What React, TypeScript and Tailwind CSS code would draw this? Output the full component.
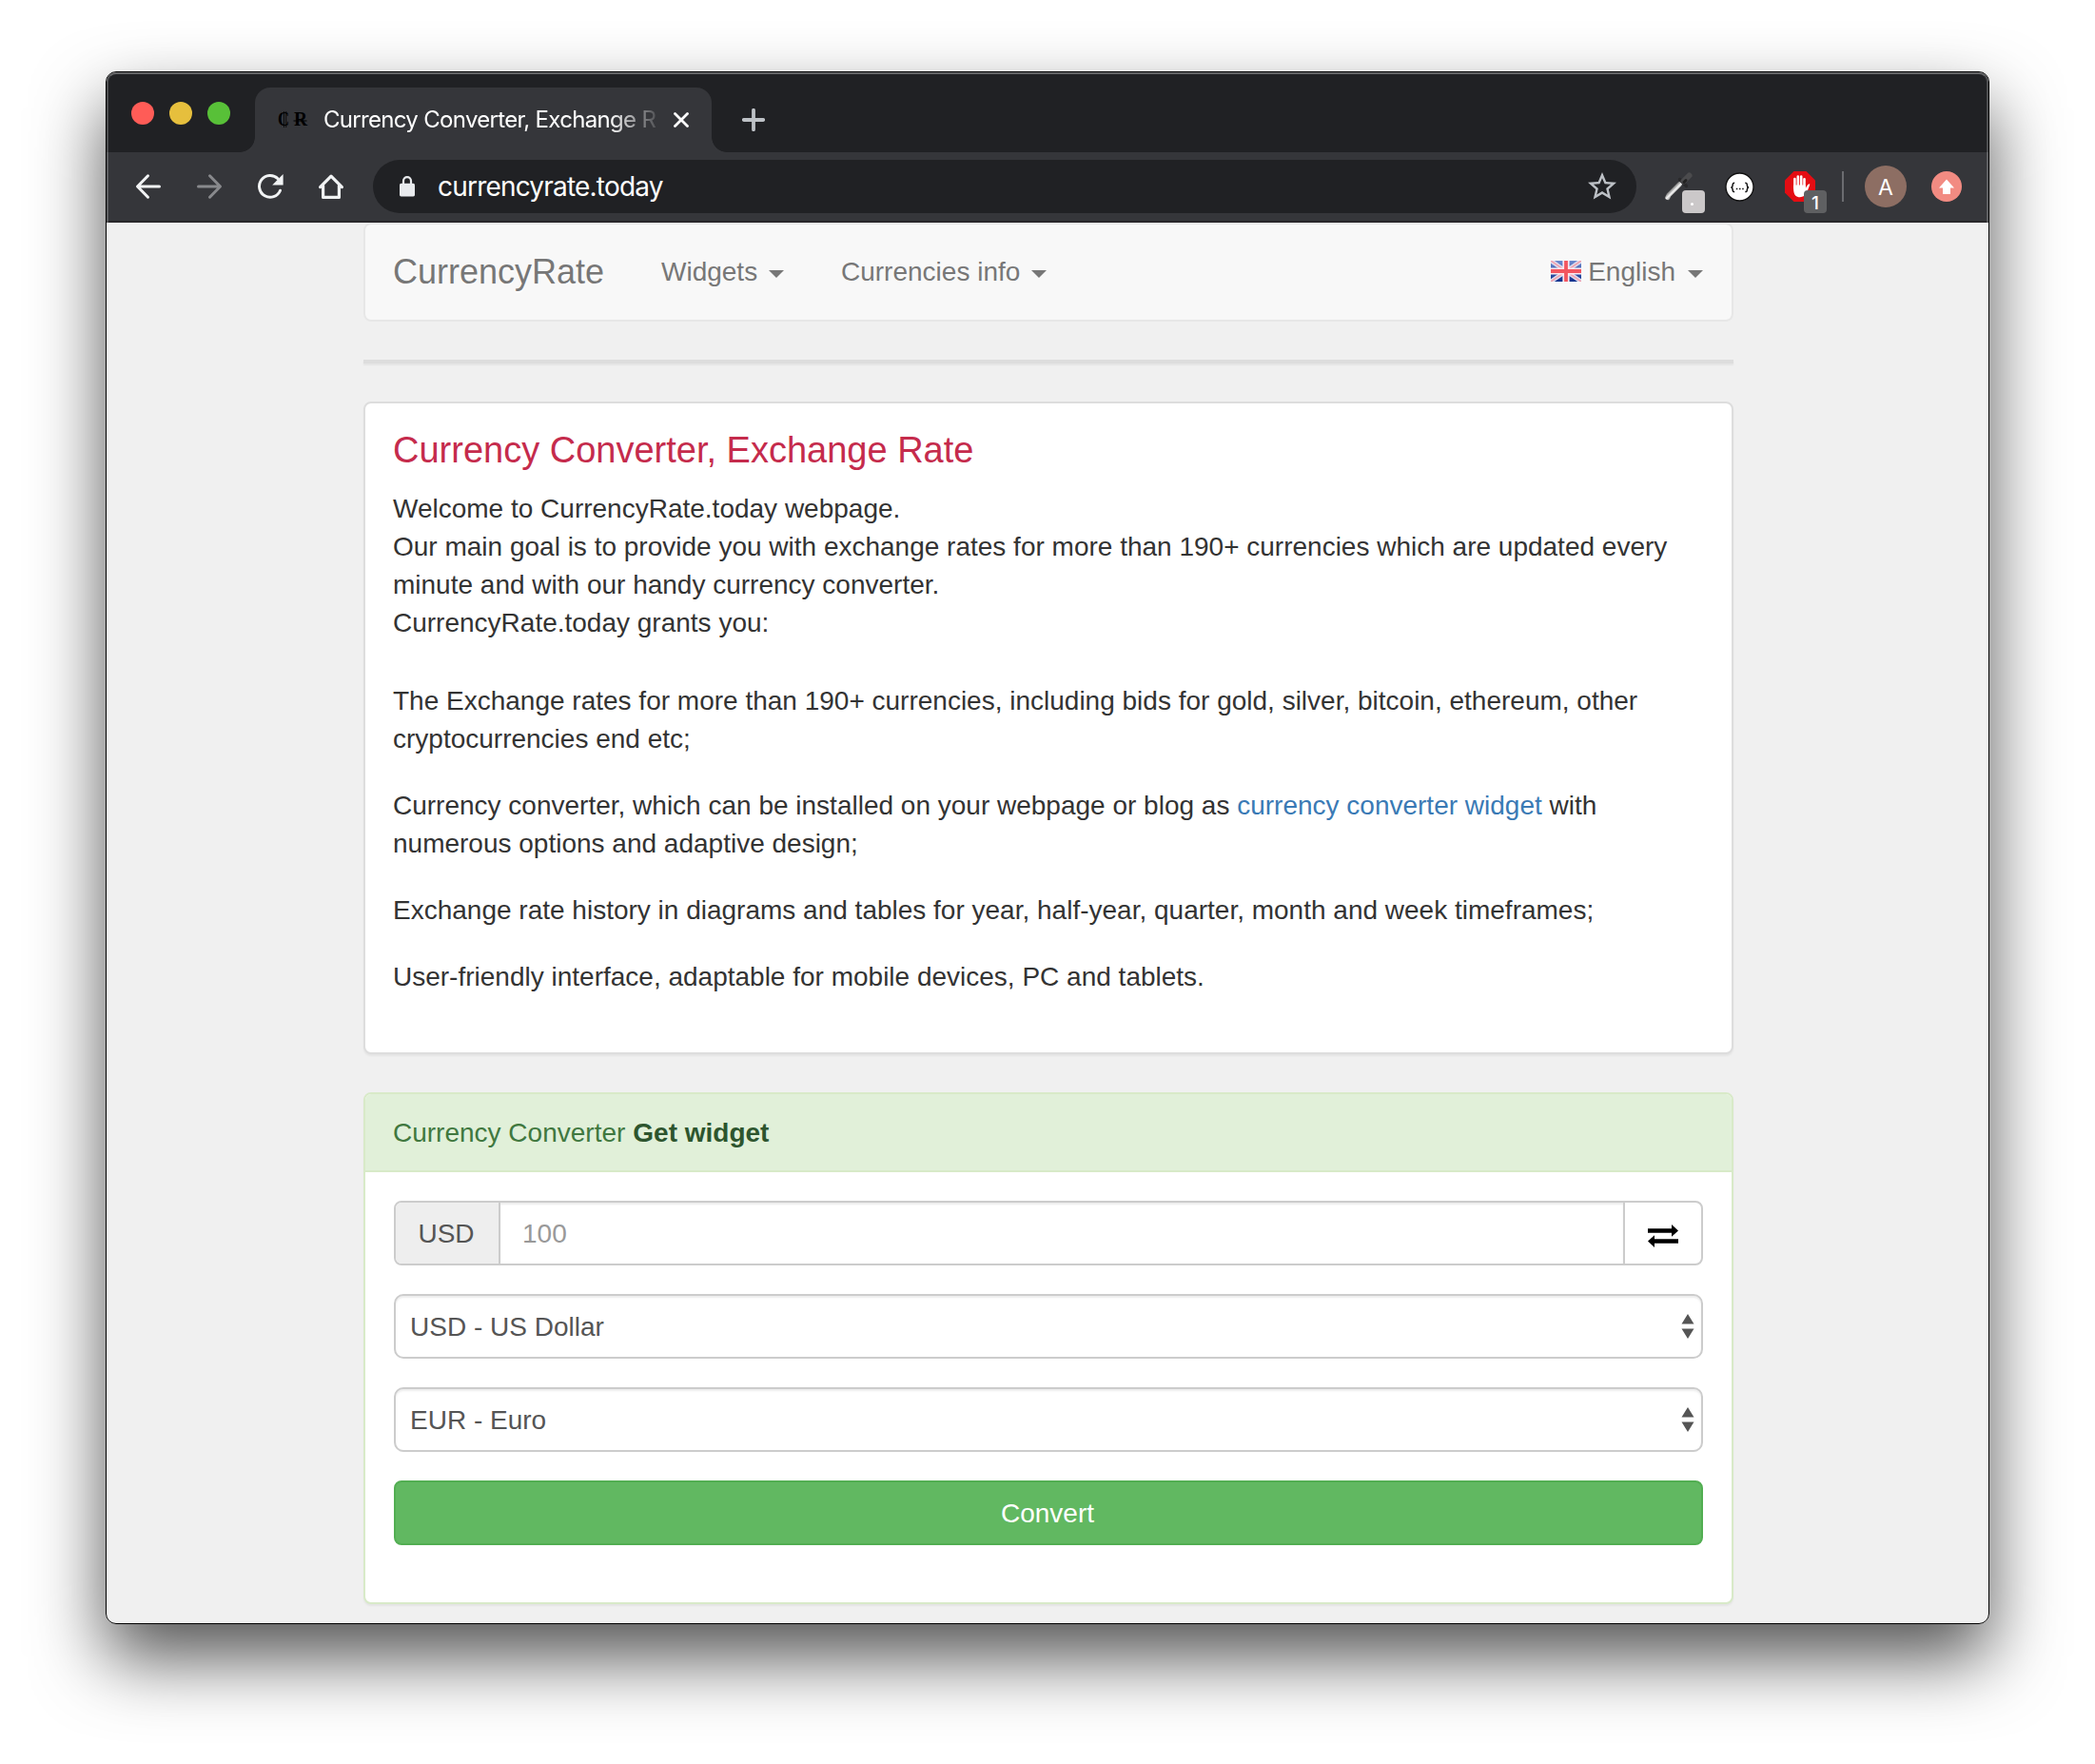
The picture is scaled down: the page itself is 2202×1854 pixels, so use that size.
import React from 'react';

const sans = "font-['Liberation_Sans',Arial,sans-serif]";
const ui = "font-[Inter,Roboto,sans-serif]";

function Caret() {
  return (
    <svg className="block h-2 w-4 shrink-0" viewBox="0 0 16 8">
      <path d="M0 0h16L8 8z" fill="#777" />
    </svg>
  );
}

function UpDown() {
  return (
    <svg className="block h-[26px] w-[14px] shrink-0" viewBox="0 0 14 26">
      <path d="M7 0l6.5 10.5H.5zM7 26L.5 15.5h13z" fill="#555" />
    </svg>
  );
}

function Flag() {
  return (
    <svg className="block h-[22px] w-8 shrink-0" viewBox="0 0 32 22">
      <defs>
        <linearGradient id="blue" x1="0" y1="0" x2="0" y2="1">
          <stop offset="0" stopColor="#6d8bd0" />
          <stop offset="1" stopColor="#0c2f8c" />
        </linearGradient>
      </defs>
      <rect width="32" height="22" fill="url(#blue)" />
      <path d="M0 0l32 22M32 0L0 22" stroke="#dddff0" strokeWidth="4.4" />
      <path d="M0 0l32 22M32 0L0 22" stroke="#f0a3b0" strokeWidth="1.8" />
      <path d="M16 0v22M0 11h32" stroke="#fbe8ee" strokeWidth="7.2" />
      <path d="M16 0v22M0 11h32" stroke="#f2555f" strokeWidth="3.8" />
    </svg>
  );
}

function TabStrip() {
  return (
    <div className="flex h-[84px] items-end bg-[#202124]">
      <div className="flex h-[84px] w-[156px] shrink-0 gap-4 pl-[26px] pt-[31px]">
        <span className="size-6 rounded-full bg-[#ff5c57]" />
        <span className="size-6 rounded-full bg-[#e6bf3d]" />
        <span className="size-6 rounded-full bg-[#58c038]" />
      </div>
      <div className="relative flex h-[68px] w-[480px] shrink-0 items-center rounded-t-2xl bg-[#35363a] pl-6">
        <span className="absolute -left-4 bottom-0 size-4 bg-[radial-gradient(circle_at_0_0,#202124_15.5px,#35363a_16.2px)]" />
        <span className="absolute -right-4 bottom-0 size-4 bg-[radial-gradient(circle_at_100%_0,#202124_15.5px,#35363a_16.2px)]" />
        <svg className="block h-8 w-8 shrink-0" viewBox="0 0 32 32">
          <text x="0" y="22" textLength="12" lengthAdjust="spacingAndGlyphs" fontFamily="Liberation Serif, serif" fontWeight="700" fontSize="20" fill="#000">C</text>
          <text x="17" y="22" textLength="14" lengthAdjust="spacingAndGlyphs" fontFamily="Liberation Serif, serif" fontWeight="700" fontSize="20" fill="#000">R</text>
          <path d="M6.5 7v17M8.7 7v17" stroke="#000" strokeWidth=".8" />
          <path d="M16.5 17h14" stroke="#000" strokeWidth="1.2" />
        </svg>
        <div className={`${ui} ml-4 w-[351px] shrink-0 whitespace-nowrap text-[24px] leading-8 tracking-[-0.69px] text-white [mask-image:linear-gradient(to_right,#000_300px,transparent_358px)]`}>
          Currency Converter, Exchange R
        </div>
        <svg className="ml-[17px] block size-4 shrink-0" viewBox="0 0 16 16">
          <path d="M1.5 1.5l13 13M14.5 1.5l-13 13" stroke="#fff" strokeWidth="2.8" strokeLinecap="round" />
        </svg>
      </div>
      <svg className="mb-[22px] ml-8 block size-6" viewBox="0 0 24 24">
        <path d="M12 1.8v20.4M1.8 12h20.4" stroke="#bdc1c6" strokeWidth="3.8" strokeLinecap="round" />
      </svg>
    </div>
  );
}

function Toolbar() {
  return (
    <div className="flex h-[74px] items-center border-b-2 border-[#29272a] bg-[#35363a] pl-[30px]">
      <svg className="block size-7 shrink-0" viewBox="0 0 28 28">
        <path d="M25.5 14H3M13.5 2.8L2.5 14l11 11.2" fill="none" stroke="#f1f3f4" strokeWidth="3" strokeLinecap="round" strokeLinejoin="round" />
      </svg>
      <svg className="ml-9 block size-7 shrink-0" viewBox="0 0 28 28">
        <path d="M2.5 14H25M14.5 2.8L25.5 14l-11 11.2" fill="none" stroke="#88898c" strokeWidth="3" strokeLinecap="round" strokeLinejoin="round" />
      </svg>
      <svg className="ml-9 block size-7 shrink-0" viewBox="0 0 28 28">
        <path d="M24.5 18.2A11.4 11.4 0 1 1 22 5.8" fill="none" stroke="#f1f3f4" strokeWidth="3" strokeLinecap="round" />
        <path d="M27.6 1v11.4H16.2z" fill="#f1f3f4" />
      </svg>
      <svg className="ml-9 block size-7 shrink-0" viewBox="0 0 28 28">
        <path d="M2.6 14.6L14 3.2l11.4 11.4M5.6 13v12.4h16.8V13" fill="none" stroke="#f1f3f4" strokeWidth="3.2" strokeLinecap="round" strokeLinejoin="round" />
      </svg>
      <div className="ml-[30px] flex h-14 w-[1328px] shrink-0 items-center rounded-full bg-[#202124] pl-7">
        <svg className="block h-[22px] w-4 shrink-0" viewBox="0 0 16 22">
          <path d="M4 9V5.2a4 4 0 0 1 8 0V9" fill="none" stroke="#e8eaed" strokeWidth="2.2" />
          <rect y="7.8" width="16" height="13.6" rx="1.6" fill="#e8eaed" />
        </svg>
        <div className={`${ui} ml-6 flex-1 text-[28px] leading-9 tracking-[-0.8px] text-white`}>currencyrate.today</div>
        <svg className="mr-[18px] block size-9 shrink-0" viewBox="0 0 24 24">
          <path d="M22 9.24l-7.19-.62L12 2 9.19 8.63 2 9.24l5.46 4.73L5.82 21 12 17.27 18.18 21l-1.63-7.03L22 9.24zM12 15.4l-3.76 2.27 1-4.28-3.32-2.88 4.38-.38L12 6.1l1.71 4.04 4.38.38-3.32 2.88 1 4.28L12 15.4z" fill="#bdc1c6" />
        </svg>
      </div>
      <div className="relative ml-7 size-9 shrink-0">
        <svg className="block size-9" viewBox="0 0 36 36">
          <defs>
            <linearGradient id="glass" gradientUnits="userSpaceOnUse" x1="9" y1="20" x2="14" y2="25">
              <stop offset=".1" stopColor="#888" />
              <stop offset=".5" stopColor="#f4f4f4" />
              <stop offset="1" stopColor="#888" />
            </linearGradient>
          </defs>
          <path d="M4.8 29.6L6 27 17.500 15.500" fill="none" stroke="url(#glass)" strokeWidth="5" strokeLinecap="round" strokeLinejoin="round" />
          <path d="M17.500 10.500l7 7" stroke="#29292b" strokeWidth="3.200" strokeLinecap="round" />
          <path d="M21.500 12.500l6-6" stroke="#4b4b4d" strokeWidth="6" strokeLinecap="round" />
          <path d="M22 13.500l2-2" stroke="#222" strokeWidth="3" strokeLinecap="round" />
        </svg>
        <span className="absolute left-5 top-[22px] size-6 rounded-[4px] bg-[#cbc8c9]">
          <span className="absolute left-[9px] top-[13px] size-[3px] rounded-full bg-white" />
        </span>
      </div>
      <svg className="ml-[28px] block size-8 shrink-0" viewBox="0 0 32 32">
        <circle cx="16.5" cy="16.5" r="14.5" fill="#fff" stroke="#111" strokeWidth="1.3" />
        <path d="M11.200 12.200c-2 0-2 .6-2 2.200 0 1.600-.3 2.200-1.700 2.500 1.400.3 1.700.9 1.700 2.500s0 2.200 2 2.200M22.300 12.200c2 0 2 .6 2 2.200 0 1.600.3 2.200 1.700 2.500-1.400.3-1.700.9-1.700 2.500s0 2.200-2 2.200" fill="none" stroke="#111" strokeWidth="1.500" />
        <path d="M12.800 18.500h1.500M16 18.500h1.500M19.200 18.500h1.500" stroke="#111" strokeWidth="1.500" />
      </svg>
      <div className="relative ml-8 size-8 shrink-0">
        <svg className="block size-8" viewBox="0 0 32 32">
          <path d="M9.500 0h13L32 9.500v13L22.500 32h-13L0 22.500v-13z" fill="#e40d13" />
          <path d="M10.400 17.500V8M13.800 16V5.500M17.200 16V5.500M20.500 17V8.200" stroke="#fff" strokeWidth="2.600" strokeLinecap="round" />
          <path d="M9.100 14.500h12.700v3.500c1.200-2.600 2.400-4.600 4-4.700.5 0 .5.600.3 1.100-1.800 4.300-2.600 9-6 11.600-2.700 1.700-7 1.500-9-.6-1.600-1.700-2-4.900-2-7.500z" fill="#fff" />
        </svg>
        <span className={`${ui} absolute left-5 top-5 flex size-6 items-center justify-center rounded-[4px] bg-[#5f6062] pt-1 text-[19px] font-medium leading-5 text-white`}>1</span>
      </div>
      <span className="ml-7 h-8 w-0.5 shrink-0 bg-[#6b6c70]" />
      <span className={`${ui} ml-[22px] flex size-11 shrink-0 items-center justify-center rounded-full bg-[#8d6e63] pt-0.5 text-[23px] text-white`}>A</span>
      <svg className="ml-[26px] block size-8 shrink-0" viewBox="0 0 32 32">
        <circle cx="16" cy="16" r="16" fill="#f28b82" />
        <path d="M16 8.500l8 9h-4v6.500h-8v-6.500H8z" fill="#fff" />
      </svg>
    </div>
  );
}

function Navbar() {
  return (
    <nav className="flex h-[104px] items-center rounded-lg border-2 border-[#e7e7e7] bg-[#f8f8f8] pl-[29px] pr-[30px] text-[28px] leading-10 text-[#777]">
      <div className="w-[281px] text-[36px] [text-shadow:0_2px_0_#fff]">CurrencyRate</div>
      <div className="flex w-[190px] items-center justify-between pl-px pr-[60px]">
        <span>Widgets</span>
        <span className="pt-1"><Caret /></span>
      </div>
      <div className="flex w-[216px] items-center justify-between">
        <span className="whitespace-nowrap">Currencies info</span>
        <span className="pt-1"><Caret /></span>
      </div>
      <div className="ml-auto flex items-center">
        <span className="mb-[3px]"><Flag /></span>
        <span className="ml-[7px] mr-[13px]">English</span>
        <span className="pt-1"><Caret /></span>
      </div>
    </nav>
  );
}

function Intro() {
  return (
    <section className="mt-10 h-[686px] rounded-lg border-2 border-[#ddd] bg-white pl-[29px] pt-[26px] text-[28px] leading-10 text-[#333] shadow-[0_2px_2px_rgba(0,0,0,0.05)]">
      <h1 className="text-[38px] leading-[46px] text-[#c52b4c]">Currency Converter, Exchange Rate</h1>
      <p className="mt-[19px]">
        Welcome to CurrencyRate.today webpage.
        <br />
        Our main goal is to provide you with exchange rates for more than 190+ currencies which are updated every
        <br />
        minute and with our handy currency converter.
        <br />
        CurrencyRate.today grants you:
      </p>
      <p className="mt-[42px]">
        The Exchange rates for more than 190+ currencies, including bids for gold, silver, bitcoin, ethereum, other
        <br />
        cryptocurrencies end etc;
      </p>
      <p className="mt-[30px]">
        Currency converter, which can be installed on your webpage or blog as{' '}
        <a className="text-[#3a7ab5]">currency converter widget</a> with
        <br />
        numerous options and adaptive design;
      </p>
      <p className="mt-[30px]">Exchange rate history in diagrams and tables for year, half-year, quarter, month and week timeframes;</p>
      <p className="mt-[30px]">User-friendly interface, adaptable for mobile devices, PC and tablets.</p>
    </section>
  );
}

function SelectBox({ label }: { label: string }) {
  return (
    <div className="mt-[30px] flex h-[68px] items-center justify-between rounded-[10px] border-2 border-[#ccc] bg-white pl-[15px] pr-[7px] shadow-[inset_0_2px_2px_rgba(0,0,0,0.075)]">
      <span className="pt-px">{label}</span>
      <UpDown />
    </div>
  );
}

function Converter() {
  return (
    <section className="mt-10 h-[538px] rounded-lg border-2 border-[#d8eac8] bg-white text-[28px] leading-10 text-[#555] shadow-[0_2px_2px_rgba(0,0,0,0.05)]">
      <header className="flex h-[82px] items-center rounded-t-md border-b-2 border-[#d8eac8] bg-[#e1f0d9] pl-[29px] pt-px text-[#40783f]">
        <span>Currency Converter</span>
        <b className="ml-2 text-[#2d552e]">Get widget</b>
      </header>
      <div className="px-[30px] pt-[30px]">
        <div className="flex h-[68px] overflow-hidden rounded-lg border-2 border-[#ccc]">
          <div className="flex w-[110px] items-center justify-center border-r-2 border-[#ccc] bg-[#eee] pr-0.5 pt-px">USD</div>
          <div className="flex flex-1 items-center pl-[23px] pt-px text-[#999] shadow-[inset_0_2px_2px_rgba(0,0,0,0.075)]">100</div>
          <div className="flex w-[82px] items-center justify-center border-l-2 border-[#ccc] pt-1.5">
            <svg className="block h-6 w-8" viewBox="0 0 32 24">
              <path d="M0 4.200h25V0l7 6.400-7 6.400V8.800H0zM32 19.800H7V24l-7-6.400 7-6.400v4h25z" fill="#000" />
            </svg>
          </div>
        </div>
        <SelectBox label="USD - US Dollar" />
        <SelectBox label="EUR - Euro" />
        <button className="mt-[30px] block h-[68px] w-full rounded-lg border-2 border-[#52ae52] bg-[#61b861] pr-0.5 pt-px text-white">Convert</button>
      </div>
    </section>
  );
}

export default function App() {
  return (
    <div className={`${sans} h-[1854px] w-[2202px] overflow-hidden bg-white pl-[111px] pt-[75px]`}>
      <div className="w-[1980px] rounded-[11px] shadow-[0_36px_74px_rgba(0,0,0,0.67)]">
        <div className="relative h-[1632px] overflow-hidden rounded-[11px] border border-black bg-[#f0f0f0]">
          <TabStrip />
          <Toolbar />
          <main className="ml-[270px] w-[1440px]">
            <Navbar />
            <div className="mt-10 h-1 bg-[#ddd] shadow-[0_2px_2px_rgba(0,0,0,0.05)]" />
            <Intro />
            <Converter />
          </main>
          <div className="pointer-events-none absolute inset-x-0 top-0 h-[158px] rounded-t-[10px] border-x-2 border-t-2 border-white/20 border-t-white/30" />
        </div>
      </div>
    </div>
  );
}
